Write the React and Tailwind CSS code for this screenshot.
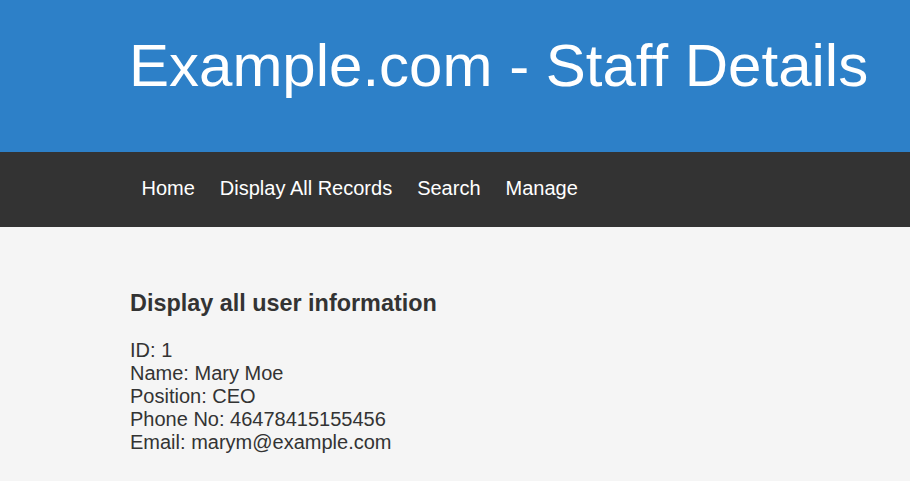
import React from 'react';

const navLinks = ['Home', 'Display All Records', 'Search', 'Manage'];

const staff = {
  id: 1,
  name: 'Mary Moe',
  position: 'CEO',
  phone: '46478415155456',
  email: 'marym@example.com',
};

const App = () => {
  return (
    <div className="min-h-[481px] bg-[#f5f5f5] text-[#333333] font-['Liberation_Sans',Arial,sans-serif]">
      <header className="h-[152px] bg-[#2d80c8] pl-[129px] pt-[31px]">
        <h1 className="text-[60px] leading-[69px] text-white">Example.com - Staff Details</h1>
      </header>

      <nav className="flex h-[75px] items-center bg-[#333333] pb-[4px] pl-[129px]">
        {navLinks.map((link) => (
          <a key={link} href="#" className="px-[12.5px] text-[20px] text-white">
            {link}
          </a>
        ))}
      </nav>

      <main className="pl-[130px] pt-[63px]">
        <h2 className="text-[23.4px] font-bold leading-[27px]">Display all user information</h2>
        <div className="mt-[22px] text-[20px] leading-[23px]">
          <p>ID: {staff.id}</p>
          <p>Name: {staff.name}</p>
          <p>Position: {staff.position}</p>
          <p>Phone No: {staff.phone}</p>
          <p>Email: {staff.email}</p>
        </div>
      </main>
    </div>
  );
};

export default App;
